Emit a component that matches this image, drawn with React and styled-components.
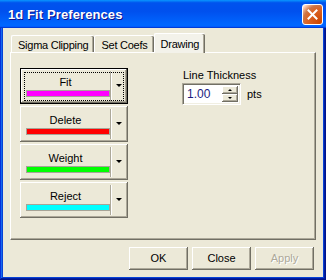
import React, { useState } from 'react';
import styled, { createGlobalStyle } from 'styled-components';

const GlobalStyle = createGlobalStyle`
  html, body {
    margin: 0;
    padding: 0;
    background: #fff;
  }
  * {
    box-sizing: border-box;
  }
`;

const Window = styled.div`
  width: 326px;
  height: 280px;
  display: flex;
  flex-direction: column;
  background: #0842d6;
  box-shadow: inset -1px -1px #00138c, inset 1px 0 #0831d9, inset -2px -2px #001ea0,
    inset 2px 0 #166aee;
  font-family: 'Liberation Sans', Arial, sans-serif;
  font-size: 11px;
  color: #000;
`;

const TitleBar = styled.div`
  height: 28px;
  flex: none;
  display: flex;
  align-items: center;
  padding: 0 3px 0 8px;
  background: linear-gradient(
    180deg,
    #0997ff,
    #0053ee 10%,
    #0050ee 40%,
    #0066ff 86%,
    #0066ff 92%,
    #005bff 95%,
    #003dd7 98%,
    #003dd7
  );
`;

const Title = styled.div`
  flex: 1;
  color: #fff;
  font-weight: bold;
  font-size: 13px;
  letter-spacing: 0.1px;
  text-shadow: 1px 1px #0f1089;
  padding-top: 1px;
`;

const CloseButton = styled.div`
  width: 21px;
  height: 21px;
  border: 1px solid #fff;
  border-radius: 3px;
  background: radial-gradient(circle at 90% 90%, #cc4600 0, #dc6527 55%, #cd7546 70%, #ffccb2 90%, #fff 100%);
  display: flex;
  align-items: center;
  justify-content: center;
  margin-top: 1px;
`;

const Body = styled.div`
  flex: 1;
  margin: 0 3px 3px;
  background: #ece9d8;
  display: flex;
  flex-direction: column;
  padding: 5px 7px 7px;
`;

const TabRow = styled.div`
  display: flex;
  align-items: flex-end;
  height: 20px;
  margin-bottom: -1px;
  padding-left: 1px;
  position: relative;
  z-index: 1;
`;

const Tab = styled.div`
  height: ${(p) => (p.$active ? 20 : 18)}px;
  padding: ${(p) => (p.$active ? '1px 6px 0' : '2px 6px 0')};
  background: ${(p) => (p.$active ? '#f3f2ea' : '#ece9d8')};
  border-top: 1px solid #fff;
  border-left: 1px solid #fff;
  border-radius: 2px 2px 0 0;
  box-shadow: inset -1px 0 #716f64, inset -2px 0 #aca899;
  display: flex;
  align-items: center;
  letter-spacing: -0.25px;
  white-space: nowrap;
  border-bottom: ${(p) => (p.$active ? 'none' : '1px solid #fff')};
`;

const Panel = styled.div`
  flex: 1;
  border: 1px solid;
  border-color: #fff #716f64 #716f64 #fff;
  box-shadow: inset -1px -1px #aca899;
  display: flex;
  padding: 15px 0 0 9px;
  gap: 54px;
`;

const ButtonColumn = styled.div`
  display: flex;
  flex-direction: column;
  gap: 2px;
  width: 108px;
`;

const ColorButton = styled.div`
  position: relative;
  height: 36px;
  display: flex;
  background: #ece9d8;
  box-shadow: ${(p) =>
    p.$default
      ? 'inset 0 0 0 1px #000, inset -2px -2px #716f64, inset 2px 2px #fff, inset -3px -3px #aca899'
      : 'inset -1px -1px #716f64, inset 1px 1px #fff, inset -2px -2px #aca899'};
`;

const FocusRing = styled.div`
  position: absolute;
  left: 4px;
  top: 4px;
  right: 4px;
  bottom: 3px;
  border: 1px dotted #000;
  pointer-events: none;
`;

const MainPart = styled.div`
  width: 90px;
  display: flex;
  flex-direction: column;
  align-items: center;
  padding: 7px 0 0 5px;
`;

const Label = styled.div`
  height: 14px;
  line-height: 14px;
  padding-right: 4px;
`;

const Swatch = styled.div`
  margin-top: 1px;
  width: 84px;
  height: 7px;
  border: 1px solid #a7a497;
  background: ${(p) => p.$color};
`;

const Separator = styled.div`
  width: 2px;
  margin: 3px 0 3px;
  border-left: 1px solid #aca899;
  border-right: 1px solid #fff;
`;

const ArrowPart = styled.div`
  flex: 1;
  display: flex;
  align-items: center;
  justify-content: center;
  padding: 0 2px 2px 0;
`;

const Arrow = styled.div`
  width: 0;
  height: 0;
  border-left: 3px solid transparent;
  border-right: 3px solid transparent;
  border-top: 3px solid #000;
`;

const ThicknessGroup = styled.div`
  display: flex;
  flex-direction: column;
  padding-top: 0px;
`;

const GroupLabel = styled.div`
  height: 14px;
  line-height: 14px;
  padding-left: 1px;
`;

const SpinRow = styled.div`
  display: flex;
  align-items: center;
  margin-top: 1px;
  gap: 6px;
`;

const SpinBox = styled.div`
  display: flex;
  height: 22px;
  border: 1px solid;
  border-color: #aca899 #fff #fff #aca899;
  box-shadow: inset 1px 1px #716f64, inset -1px -1px #f1efe2;
  background: #fff;
  padding: 2px;
`;

const SpinInput = styled.div`
  width: 37px;
  padding: 1px 0 0 2px;
  color: #1c1c80;
  font-size: 12px;
  line-height: 15px;
`;

const SpinButtons = styled.div`
  width: 16px;
  display: flex;
  flex-direction: column;
  gap: 0;
`;

const SpinButton = styled.div`
  flex: 1;
  background: #ece9d8;
  box-shadow: inset -1px -1px #716f64, inset 1px 1px #fff, inset -2px -2px #aca899;
  display: flex;
  align-items: center;
  justify-content: center;
`;

const SmallArrow = styled.div`
  width: 0;
  height: 0;
  border-left: 2px solid transparent;
  border-right: 2px solid transparent;
  ${(p) => (p.$up ? 'border-bottom: 2px solid #000;' : 'border-top: 2px solid #000;')}
`;

const Units = styled.div`
  font-size: 11px;
`;

const Footer = styled.div`
  display: flex;
  justify-content: flex-end;
  gap: 4px;
  padding-right: 2px;
  margin-top: 7px;
`;

const DialogButton = styled.div`
  width: 59px;
  height: 23px;
  display: flex;
  align-items: center;
  justify-content: center;
  background: #ece9d8;
  box-shadow: inset -1px -1px #716f64, inset 1px 1px #fff, inset -2px -2px #aca899;
  color: ${(p) => (p.$disabled ? '#aca899' : '#000')};
  text-shadow: ${(p) => (p.$disabled ? '1px 1px #fff' : 'none')};
  padding-bottom: 1px;
`;

const styles = [
  { name: 'Fit', color: '#ff00ff' },
  { name: 'Delete', color: '#ff0000' },
  { name: 'Weight', color: '#00ff00' },
  { name: 'Reject', color: '#00ffff' },
];

const tabs = ['Sigma Clipping', 'Set Coefs', 'Drawing'];

export default function App() {
  const [activeTab] = useState('Drawing');

  return (
    <>
      <GlobalStyle />
      <Window>
        <TitleBar>
          <Title>1d Fit Preferences</Title>
          <CloseButton>
            <svg width="11" height="11" viewBox="0 0 11 11">
              <path d="M1.5 1.5 L9.5 9.5 M9.5 1.5 L1.5 9.5" stroke="#fff" strokeWidth="2" strokeLinecap="square" />
            </svg>
          </CloseButton>
        </TitleBar>
        <Body>
          <TabRow>
            {tabs.map((t) => (
              <Tab key={t} $active={t === activeTab}>
                {t}
              </Tab>
            ))}
          </TabRow>
          <Panel>
            <ButtonColumn>
              {styles.map((s, i) => (
                <ColorButton key={s.name} $default={i === 0}>
                  {i === 0 && <FocusRing />}
                  <MainPart>
                    <Label>{s.name}</Label>
                    <Swatch $color={s.color} />
                  </MainPart>
                  <Separator />
                  <ArrowPart>
                    <Arrow />
                  </ArrowPart>
                </ColorButton>
              ))}
            </ButtonColumn>
            <ThicknessGroup>
              <GroupLabel>Line Thickness</GroupLabel>
              <SpinRow>
                <SpinBox>
                  <SpinInput>1.00</SpinInput>
                  <SpinButtons>
                    <SpinButton>
                      <SmallArrow $up />
                    </SpinButton>
                    <SpinButton>
                      <SmallArrow />
                    </SpinButton>
                  </SpinButtons>
                </SpinBox>
                <Units>pts</Units>
              </SpinRow>
            </ThicknessGroup>
          </Panel>
          <Footer>
            <DialogButton>OK</DialogButton>
            <DialogButton>Close</DialogButton>
            <DialogButton $disabled>Apply</DialogButton>
          </Footer>
        </Body>
      </Window>
    </>
  );
}
